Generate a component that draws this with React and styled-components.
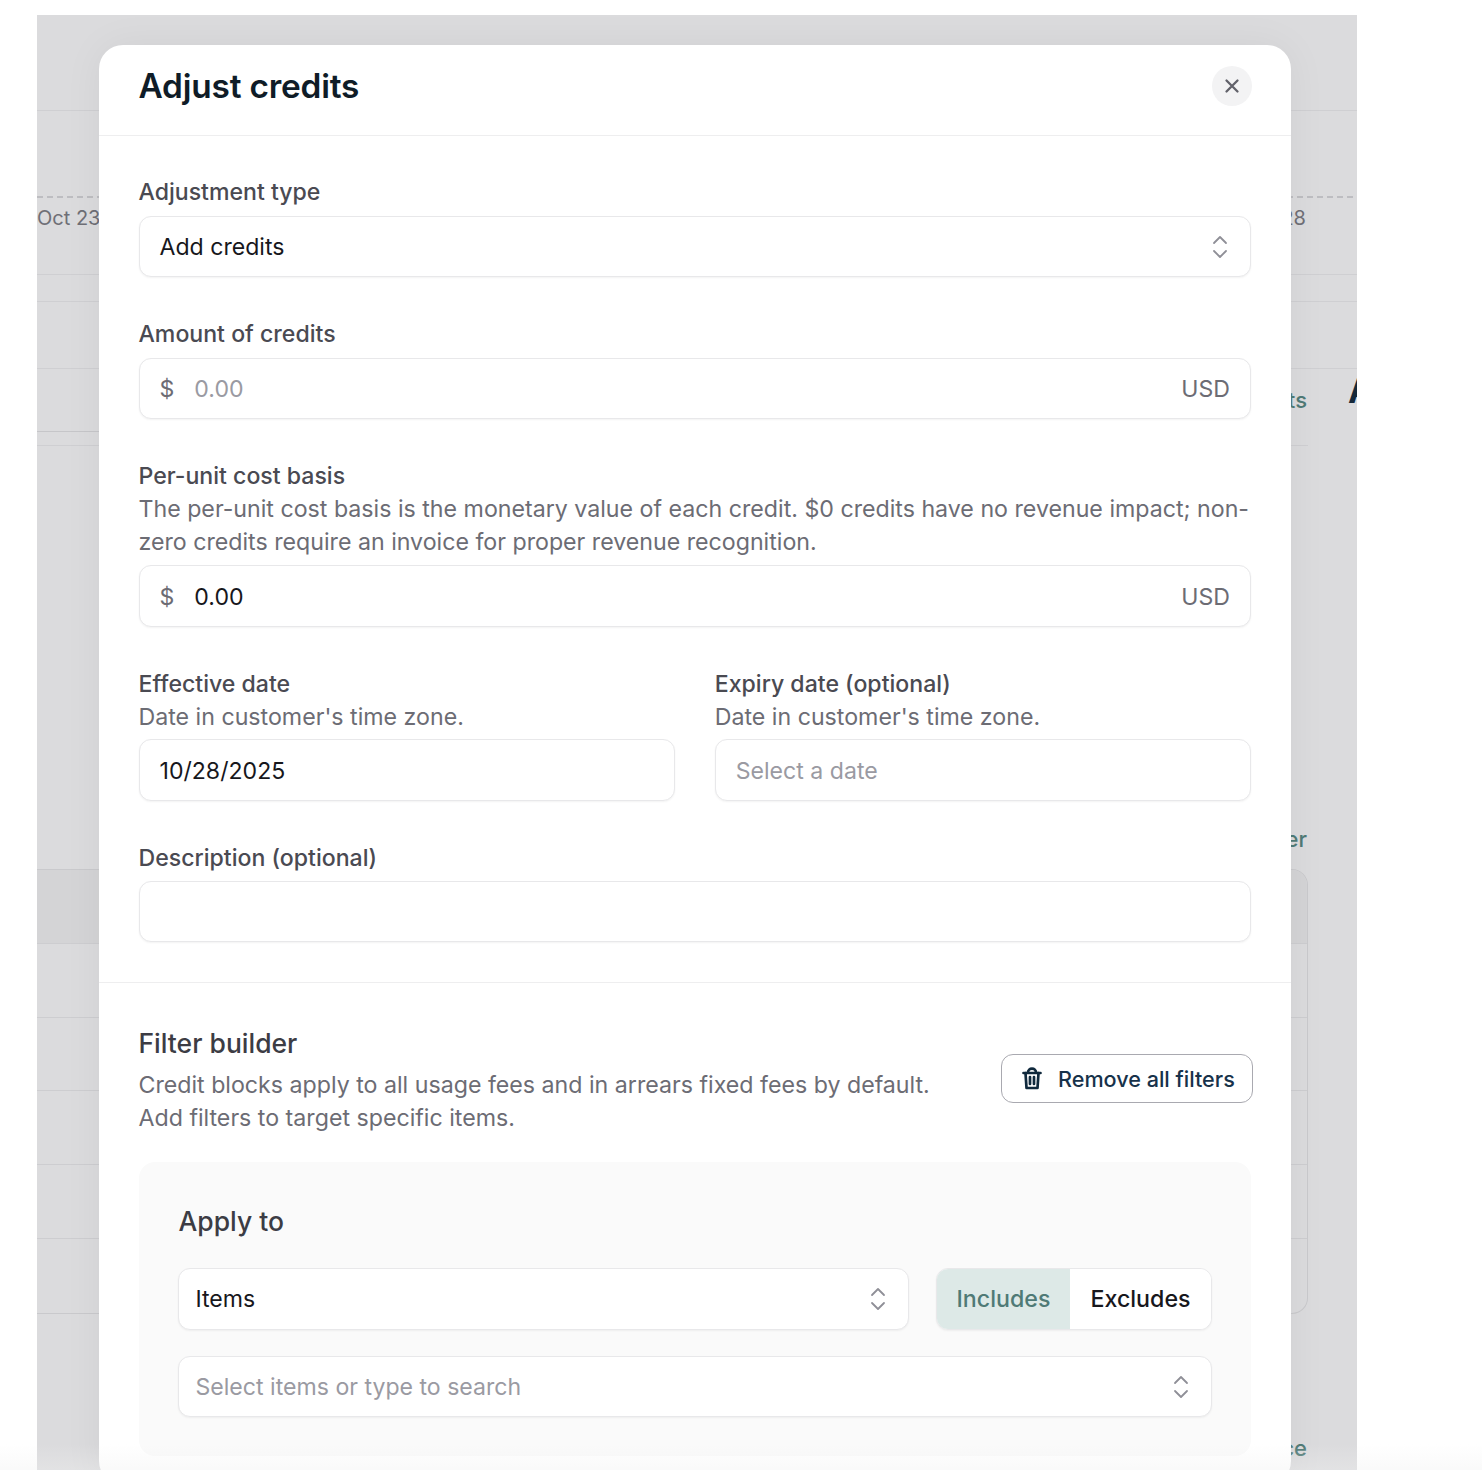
import React from "react";
import styled, { createGlobalStyle } from "styled-components";

const Global = createGlobalStyle`
  html, body { margin: 0; padding: 0; background: #fff; }
  body { height: 1470px; overflow: hidden; font-family: Inter, "Liberation Sans", sans-serif; }
  * { box-sizing: border-box; }
`;

const Page = styled.div`
  position: relative;
  width: 1482px;
  height: 1470px;
  padding: 15px 125px 0 37px;
  overflow: hidden;
`;

const Backdrop = styled.div`
  height: 1455px;
  background: #dbdbdd;
  color: #6f6f76;
  display: flex;
  flex-direction: column;
  overflow: hidden;
`;

const Band = styled.div`
  flex: none;
  height: ${(p) => p.$h}px;
  border-bottom: 1px solid #cfcfd2;
`;

const AxisRow = styled.div`
  flex: none;
  height: 164px;
  border-bottom: 1px solid #cfcfd2;
  display: flex;
  flex-direction: column;
`;

const Dashed = styled.div`
  flex: none;
  height: 1.5px;
  margin: 85px 4px 0 0;
  background: repeating-linear-gradient(to right, #bdbdc1 0 6px, transparent 6px 10px);
`;

const AxisLabels = styled.div`
  display: flex;
  justify-content: space-between;
  padding: 7.5px 51px 0 0;
  font-size: 20px;
  line-height: 26px;
  color: #6f6f76;
`;

const TabsRow = styled.div`
  flex: none;
  height: 62px;
  margin-right: 50px;
  display: flex;
  justify-content: flex-end;
  padding-top: 16px;
  color: #4f7a76;
  font-size: 22px;
  line-height: 30px;
  font-weight: 500;
`;

const Heading = styled.span`
  width: 9px;
  overflow: hidden;
  margin: -14px -50px 0 41px;
  color: #16293a;
  font-size: 34px;
  font-weight: 700;
  line-height: 40px;
`;

const TabsRule = styled.div`
  flex: none;
  height: 15px;
  margin-right: 49px;
  border-bottom: 1px solid #cfcfd2;
`;

const SelectedTabRule = styled.div`
  width: 200px;
  border-top: 1px solid #c6c6c9;
`;

const SideRow = styled.div`
  flex: none;
  height: ${(p) => p.$h}px;
  display: flex;
  justify-content: flex-end;
  align-items: flex-end;
  padding-right: 50px;
  color: #4f7a76;
  font-size: 22px;
  font-weight: 500;
  line-height: 30px;
`;

const Card = styled.div`
  flex: none;
  margin: 15px 49px 0 0;
  border: 1px solid #c9c9cc;
  border-left: 0;
  border-radius: 0 16px 16px 0;
  overflow: hidden;
`;

const CardRow = styled.div`
  height: 73.8px;
  background: ${(p) => (p.$head ? "#d4d4d6" : "transparent")};
  border-bottom: ${(p) => (p.$last ? "0" : "1px solid #cdcdd0")};
`;

const Modal = styled.div`
  position: absolute;
  left: 99px;
  top: 45px;
  width: 1192px;
  height: 1440px;
  background: #fff;
  border-radius: 24px;
  box-shadow: 0 0 40px rgba(0, 0, 0, 0.05);
`;

const Header = styled.div`
  height: 91px;
  padding: 0 39px 8px 39.5px;
  display: flex;
  align-items: center;
  justify-content: space-between;
  border-bottom: 1px solid #eeeeef;
`;

const Title = styled.h1`
  margin: 0;
  font-size: 33.4px;
  font-weight: 600;
  letter-spacing: -0.2px;
  color: #0f1c27;
`;

const CloseButton = styled.button`
  width: 40px;
  height: 40px;
  border-radius: 50%;
  border: 0;
  padding: 0;
  background: #f3f3f4;
  color: #62626a;
  display: flex;
  align-items: center;
  justify-content: center;
`;

const Body = styled.div`
  padding: 40px 40px 40px 39.5px;
  display: flex;
  flex-direction: column;
  gap: 41px;
  border-bottom: 1px solid #eeeeef;
`;

const Field = styled.div`
  display: flex;
  flex-direction: column;
  min-width: 0;
`;

const DateGrid = styled.div`
  display: grid;
  grid-template-columns: 1fr 1fr;
  gap: 40px;
`;

const Label = styled.label`
  font-size: 23.1px;
  line-height: 33px;
  font-weight: 500;
  color: #4a4a52;
`;

const Help = styled.div`
  font-size: 23.18px;
  line-height: 33px;
  color: #6c6c74;
`;

const Control = styled.div`
  margin-top: ${(p) => p.$top ?? 6.5}px;
  height: 61.5px;
  display: flex;
  align-items: center;
  gap: 20px;
  padding: 2px 20px 0;
  background: #fff;
  border: 1.5px solid #e8e8ea;
  border-radius: 12px;
  box-shadow: 0 1px 2px rgba(0, 0, 0, 0.05);
  font-size: 23.1px;
  color: #17171c;
`;

const SelectControl = styled(Control)`
  padding-right: 22px;
`;

const Value = styled.span`
  flex: 1;
  color: ${(p) => (p.$muted ? "#9a9aa2" : "#17171c")};
`;

const Affix = styled.span`
  color: #6c6c74;
`;

const Section = styled.div`
  padding: 41px 40px 0 39.5px;
`;

const FilterHead = styled.div`
  display: flex;
  justify-content: space-between;
  align-items: flex-start;
`;

const FilterTitle = styled.h2`
  margin: 0 0 7px;
  font-size: 26.5px;
  line-height: 38px;
  font-weight: 500;
  color: #3c3c44;
`;

const RemoveButton = styled.button`
  margin: 30px -2px 0 0;
  width: 252px;
  height: 49px;
  padding: 0 0 0 20px;
  display: flex;
  align-items: center;
  gap: 16px;
  background: #fff;
  border: 1.5px solid #a9a9b0;
  border-radius: 12px;
  font: 500 21.6px Inter, sans-serif;
  color: #17324a;
`;

const Panel = styled.div`
  margin-top: 27px;
  height: 294px;
  border-radius: 16px;
  background: #fafafa;
  padding: 41px 39px 0;
`;

const PanelTitle = styled.h3`
  margin: 0 0 0 1px;
  font-size: 26.5px;
  line-height: 36px;
  font-weight: 500;
  color: #3c3c44;
`;

const PanelRow = styled.div`
  margin-top: 29px;
  display: flex;
  gap: 27px;
`;

const PanelControl = styled(SelectControl)`
  flex: 1;
  padding: 1px 22px 0 17px;
`;

const Toggle = styled.div`
  flex: none;
  width: 276px;
  height: 61.5px;
  display: flex;
  border: 1.5px solid #e8e8ea;
  border-radius: 12px;
  overflow: hidden;
  background: #fff;
  box-shadow: 0 1px 2px rgba(0, 0, 0, 0.05);
  font-size: 23.2px;
  font-weight: 500;
`;

const ToggleOption = styled.div`
  flex: ${(p) => (p.$active ? "0 0 133px" : "1")};
  display: flex;
  align-items: center;
  justify-content: center;
  background: ${(p) => (p.$active ? "#dde9e7" : "#fff")};
  color: ${(p) => (p.$active ? "#4f7a76" : "#17171c")};
`;

const BottomFade = styled.div`
  position: absolute;
  left: 0;
  right: 0;
  bottom: 0;
  height: 26px;
  background: linear-gradient(to bottom, rgba(240, 240, 240, 0), rgba(240, 240, 240, 0.35));
`;

const Chevrons = () => (
  <svg width="16" height="26" viewBox="0 0 16 26" fill="none" stroke="#8f8f97" strokeWidth="1.8" strokeLinecap="round" strokeLinejoin="round">
    <path d="M2 9l6-6 6 6" />
    <path d="M2 17l6 6 6-6" />
  </svg>
);

const Close = () => (
  <svg width="16" height="16" viewBox="0 0 16 16" fill="none" stroke="currentColor" strokeWidth="2.3" strokeLinecap="round">
    <path d="M2.5 2.5l11 11M13.5 2.5l-11 11" />
  </svg>
);

const Trash = () => (
  <svg width="20" height="23" viewBox="0 0 20 23" fill="none" stroke="#10293d" strokeWidth="2.7" strokeLinecap="round" strokeLinejoin="round">
    <path d="M1.5 6h17" />
    <path d="M6 5.5a4 3.8 0 0 1 8 0" />
    <path d="M3.5 6l1 15h11l1-15" />
    <path d="M8 10v7M12 10v7" />
  </svg>
);

export default function App() {
  return (
    <Page>
      <Global />
      <Backdrop>
        <Band $h={96} />
        <AxisRow>
          <Dashed />
          <AxisLabels>
            <span>Oct 23</span>
            <span>Oct 28</span>
          </AxisLabels>
        </AxisRow>
        <Band $h={27} />
        <Band $h={67} />
        <TabsRow>
          <span>Credits</span>
          <Heading>A</Heading>
        </TabsRow>
        <TabsRule><SelectedTabRule /></TabsRule>
        <SideRow $h={408}>Ledger</SideRow>
        <Card>
          <CardRow $head />
          <CardRow />
          <CardRow />
          <CardRow />
          <CardRow />
          <CardRow $last />
        </Card>
        <SideRow $h={149}>Invoice</SideRow>
      </Backdrop>
      <Modal>
        <Header>
          <Title>Adjust credits</Title>
          <CloseButton aria-label="Close"><Close /></CloseButton>
        </Header>
        <Body>
          <Field>
            <Label>Adjustment type</Label>
            <SelectControl>
              <Value>Add credits</Value>
              <Chevrons />
            </SelectControl>
          </Field>
          <Field>
            <Label>Amount of credits</Label>
            <Control>
              <Affix>$</Affix>
              <Value $muted>0.00</Value>
              <Affix>USD</Affix>
            </Control>
          </Field>
          <Field>
            <Label>Per-unit cost basis</Label>
            <Help>The per-unit cost basis is the monetary value of each credit. $0 credits have no revenue impact; non-zero credits require an invoice for proper revenue recognition.</Help>
            <Control $top={6}>
              <Affix>$</Affix>
              <Value>0.00</Value>
              <Affix>USD</Affix>
            </Control>
          </Field>
          <DateGrid>
            <Field>
              <Label>Effective date</Label>
              <Help>Date in customer's time zone.</Help>
              <Control $top={5.5}><Value>10/28/2025</Value></Control>
            </Field>
            <Field>
              <Label>Expiry date (optional)</Label>
              <Help>Date in customer's time zone.</Help>
              <Control $top={5.5}><Value $muted>Select a date</Value></Control>
            </Field>
          </DateGrid>
          <Field>
            <Label>Description (optional)</Label>
            <Control $top={6} />
          </Field>
        </Body>
        <Section>
          <FilterHead>
            <div>
              <FilterTitle>Filter builder</FilterTitle>
              <Help>Credit blocks apply to all usage fees and in arrears fixed fees by default.<br />Add filters to target specific items.</Help>
            </div>
            <RemoveButton><Trash />Remove all filters</RemoveButton>
          </FilterHead>
          <Panel>
            <PanelTitle>Apply to</PanelTitle>
            <PanelRow>
              <PanelControl $top={0}>
                <Value>Items</Value>
                <Chevrons />
              </PanelControl>
              <Toggle>
                <ToggleOption $active>Includes</ToggleOption>
                <ToggleOption>Excludes</ToggleOption>
              </Toggle>
            </PanelRow>
            <PanelControl $top={26}>
              <Value $muted>Select items or type to search</Value>
              <Chevrons />
            </PanelControl>
          </Panel>
        </Section>
      </Modal>
      <BottomFade />
    </Page>
  );
}
